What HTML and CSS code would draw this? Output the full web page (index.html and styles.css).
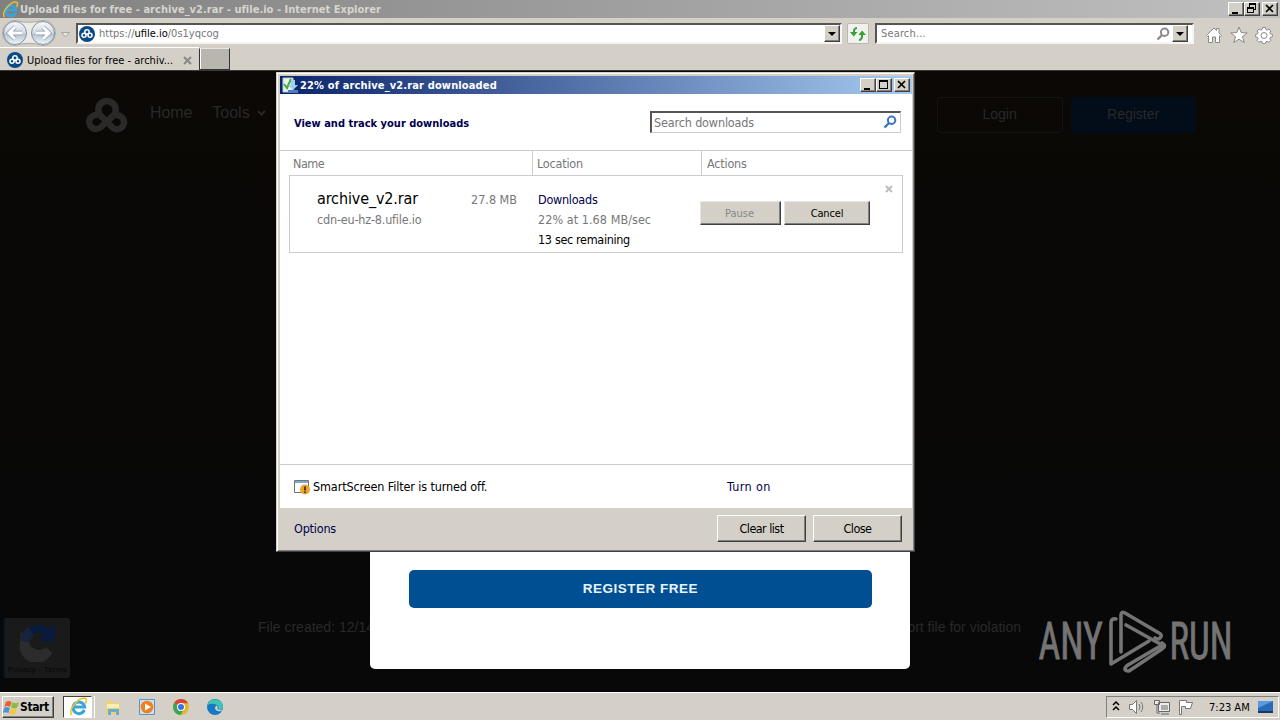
FILE: index.html
```
<!DOCTYPE html>
<html lang="en">
<head>
  <meta charset="UTF-8">
  <title>Upload files for free - archive_v2.rar - ufile.io</title>
  <link rel="stylesheet" href="styles.css">
</head>
<body>
  <svg class="defs" width="0" height="0">
    <symbol id="cloud" viewBox="0 0 46 35">
      <g fill="none" stroke="currentColor" stroke-width="6.500">
        <path d="M29 18A8.700 8.700 0 1 0 17 18L27.500 28.500A7 7 0 1 0 31 17.500"/>
        <path d="M15 17.500A7 7 0 1 0 17 29L29 18"/>
      </g>
    </symbol>
    <symbol id="ie" viewBox="0 0 18 18">
      <path d="M14.500 12.200A5.500 5.500 0 1 1 14.800 9.500H5" fill="none" stroke="#38a5dc" stroke-width="2.800"/>
      <path d="M2.500 17C-1 12 9 0 15.500 1.200c2 1 1 3 0 5" fill="none" stroke="#efc02d" stroke-width="1.500"/>
    </symbol>
    <symbol id="favicon" viewBox="0 0 16 16">
      <circle cx="8" cy="8" r="8" fill="#0a4a87"/>
      <g fill="none" stroke="#fff" stroke-width="1.500"><circle cx="8" cy="6" r="2.200"/><circle cx="5" cy="9.300" r="2"/><circle cx="11" cy="9.300" r="2"/></g>
    </symbol>
    <symbol id="glass" viewBox="0 0 14 14">
      <circle cx="8.600" cy="5.200" r="3.700" fill="none" stroke="currentColor" stroke-width="2"/>
      <path d="M6 8L1.500 12.500" stroke="currentColor" stroke-width="2.400"/>
    </symbol>
    <symbol id="min" viewBox="0 0 16 14"><path d="M4 10h6v2H4z"/></symbol>
    <symbol id="max" viewBox="0 0 16 14"><path d="M3 2h9v9H3zM4 4v6h7V4z" fill-rule="evenodd"/></symbol>
    <symbol id="restore" viewBox="0 0 16 14"><path d="M5 1h7v7h-2v3H3V5h2zM6 3v2h4v2h1V3zM4 7v3h5V7z" fill-rule="evenodd"/></symbol>
    <symbol id="close" viewBox="0 0 16 14"><path d="M4 3l7 7M11 3l-7 7" stroke="#000" stroke-width="1.700"/></symbol>
  </svg>

  <header class="browser">
    <div class="titlebar">
      <svg class="title-icon"><use href="#ie"/></svg>
      <span class="title-text">Upload files for free - archive_v2.rar - ufile.io - Internet Explorer</span>
      <div class="win-buttons">
        <span class="wb"><svg><use href="#min"/></svg></span><span class="wb"><svg><use href="#restore"/></svg></span><span class="wb last"><svg><use href="#close"/></svg></span>
      </div>
    </div>
    <div class="navbar">
      <svg class="back-forward" viewBox="0 0 72 28">
        <defs><linearGradient id="ball" x2="0" y2="1"><stop stop-color="#f7f8fa"/><stop offset=".5" stop-color="#d3dae2"/><stop offset=".55" stop-color="#b5c3d1"/><stop offset="1" stop-color="#eefaff"/></linearGradient></defs>
        <path d="M15 1.500Q29 5 43 1.500A12 12 0 0 1 43 26.500Q29 22 15 26.500A12 12 0 0 1 15 1.500" fill="#eceae6" stroke="#aaa8a4"/>
        <circle cx="15" cy="14" r="11.500" fill="url(#ball)" stroke="#8393a3"/>
        <circle cx="43" cy="14" r="11.500" fill="url(#ball)" stroke="#8393a3"/>
        <path d="M15 8l-6 6 6 6M10 14h12" fill="none" stroke="#8796a6" stroke-width="4.400"/>
        <path d="M43 8l6 6-6 6M48 14H36" fill="none" stroke="#8796a6" stroke-width="4.400"/>
        <path d="M15 8l-6 6 6 6M10 14h12" fill="none" stroke="#fff" stroke-width="3"/>
        <path d="M43 8l6 6-6 6M48 14H36" fill="none" stroke="#fff" stroke-width="3"/>
        <path d="M61.500 13.500h8l-4 4.500z" fill="#e8e6e2" stroke="#aaa69f"/>
      </svg>
      <div class="address">
        <svg class="fav"><use href="#favicon"/></svg>
        <span class="url">https://<b>ufile.io</b>/0s1yqcog</span>
        <span class="drop"></span>
      </div>
      <div class="refresh">
        <svg width="18" height="16" viewBox="0 0 18 16"><path d="M8 2Q4.500 2 5 7M10 14q3.500 0 3-6" fill="none" stroke="#35a035" stroke-width="2"/><path d="M1 6h7.500L4.700 10.500zM9.500 9L13 4.500 17 9z" fill="#35a035"/></svg>
      </div>
      <div class="search">
        <span class="search-text">Search...</span>
        <svg class="glass"><use href="#glass"/></svg>
        <span class="drop"></span>
      </div>
      <div class="tools">
        <svg viewBox="0 0 18 18"><path d="M1.500 9.500L9 2l2.500 2.500V2.500h2.500V7l2.500 2.500-1 1-1-.8V16.500h-4V11H7.500v5.500h-4V9.700l-1 .8z"/></svg>
        <svg viewBox="0 0 18 18"><path d="M9 1l2.200 5.600 6 .3-4.700 3.700 1.700 5.900L9 13.200l-5.200 3.300 1.700-5.900L.8 6.900l6-.3z"/></svg>
        <svg viewBox="0 0 18 18"><path d="M7.500 1.500h3l.4 2 1.300.6L14 3l1.800 1.900-1 1.800.5 1.100 2 .5v2.600l-2 .5-.5 1.200 1 1.800-1.900 1.900-1.800-1-1.200.5-.5 1.900h-3l-.4-2-1.100-.5-1.900 1.100-1.900-1.900 1-1.800-.5-1.200-2-.5V8.300l2-.5.500-1.100-1-1.800L4 3l1.800 1.100 1.200-.5z"/><circle cx="9" cy="9.500" r="3"/></svg>
      </div>
    </div>
    <div class="tabs">
      <div class="tab">
        <svg class="fav"><use href="#favicon"/></svg>
        <span class="tab-text">Upload files for free - archiv...</span>
        <svg class="tab-close" viewBox="0 0 9 9"><path d="M1 1l7 7M8 1L1 8" stroke="#8b8883" stroke-width="2"/></svg>
      </div>
      <div class="new-tab"></div>
    </div>
  </header>

  <main class="page">
    <nav class="site-nav">
      <svg class="logo"><use href="#cloud"/></svg>
      <span class="link">Home</span>
      <span class="link">Tools</span>
      <svg class="chev" viewBox="0 0 9 6"><path d="M1 1l3.500 3.500L8 1" fill="none" stroke="#292827" stroke-width="2"/></svg>
      <span class="site-btn login">Login</span>
      <span class="site-btn register">Register</span>
    </nav>
    <div class="meta">
      <span>File created: 12/14/2024</span>
      <span>Report file for violation</span>
    </div>
    <div class="captcha">
      <svg viewBox="0 0 40 40"><path d="M3 10l8 8a10 10 0 0 0 17 7l6 6A17 17 0 0 1 2 20z" fill="#2c2c2c"/><path d="M3 19A17 17 0 0 1 31 7l6-5v17H20l6-6a9 9 0 0 0-14 3z" fill="#0a1a3c"/><path d="M3 19A17 17 0 0 1 10 5l6 8-5 7z" fill="#16233c"/></svg>
      <span>Privacy - Terms</span>
    </div>
    <div class="modal"><div class="register-free">REGISTER FREE</div></div>
    <svg class="watermark" viewBox="0 0 200 70">
      <g fill="#747474" stroke="#747474" stroke-width=".8" font-family="Roboto" font-size="51.500">
        <text transform="translate(3.500 53.300) scale(.7 1)" textLength="92" lengthAdjust="spacingAndGlyphs">ANY</text>
        <text transform="translate(134.500 53.300) scale(.7 1)" textLength="90" lengthAdjust="spacingAndGlyphs">RUN</text>
      </g>
      <g fill="none" stroke="#747474" stroke-width="3.600" stroke-linecap="round" stroke-linejoin="round">
        <path d="M81 13q-5-1-5 4v41l38-23"/><path d="M86 46V9q0-4 4-2l34 20q4 2 1 5-2 2-5 0"/><path d="M91 19l36 20-34 20q-3 2-3 4t4 2l33-22q5-3 0-6"/>
      </g>
    </svg>
  </main>

  <section class="dialog">
    <div class="dlg-title">
      <svg class="dlg-icon" viewBox="0 0 16 16"><path d="M1 1h10v14H1z" fill="#e9f1e9" stroke="#b9cbd5"/><path d="M2 7l3 4 4-9" fill="none" stroke="#42ab45" stroke-width="2"/><path d="M9 3h4v5h3l-5 5-5-5h3z" fill="#9bd0f4"/><path d="M6 13h10v3H6z" fill="#4c7fba"/></svg>
      <span class="dlg-title-text">22% of archive_v2.rar downloaded</span>
      <div class="win-buttons">
        <span class="wb"><svg><use href="#min"/></svg></span><span class="wb"><svg><use href="#max"/></svg></span><span class="wb last"><svg><use href="#close"/></svg></span>
      </div>
    </div>
    <div class="dlg-head">
      <h1>View and track your downloads</h1>
      <div class="dlg-search"><span>Search downloads</span><svg><use href="#glass"/></svg></div>
    </div>
    <div class="columns">
      <span class="c1">Name</span><span class="c2">Location</span><span class="c3">Actions</span>
    </div>
    <div class="item">
      <div class="file"><span class="fname">archive_v2.rar</span><span class="host">cdn-eu-hz-8.ufile.io</span></div>
      <span class="size">27.8 MB</span>
      <div class="where"><span class="navy dl">Downloads</span><span class="speed">22% at 1.68 MB/sec</span><span class="remain">13 sec remaining</span></div>
      <div class="actions"><span class="btn pause">Pause</span><span class="btn cancel">Cancel</span></div>
      <svg class="item-close" viewBox="0 0 8 8"><path d="M1 1l6 6M7 1L1 7" stroke="#bdbdbd" stroke-width="2"/></svg>
    </div>
    <div class="smart">
      <svg viewBox="0 0 16 16"><path d="M.5 1.500h14v12H.5z" fill="#fff" stroke="#77736d"/><path d="M1 3h13" stroke="#7ca9d5" stroke-width="2"/><circle cx="11" cy="10.500" r="5" fill="#eea32d"/><path d="M11 7.500v4M11 12.500v1.500" stroke="#44300e" stroke-width="1.800"/></svg>
      <span class="ss">SmartScreen Filter is turned off.</span>
      <span class="navy on">Turn on</span>
    </div>
    <div class="dlg-foot">
      <span class="navy opt">Options</span>
      <span class="btn big">Clear list</span><span class="btn big">Close</span>
    </div>
  </section>

  <footer class="taskbar">
    <div class="start">
      <svg viewBox="0 0 18 16"><path d="M3 2q3-2 6 0L7.500 7.500q-3-2-6 0z" fill="#e8622c"/><path d="M10 2.500q3 2 7 0L15 8q-3 2-6.500 0z" fill="#8bbb40"/><path d="M1.200 8.500q3-2 6 0L5.700 14q-3-2-6 0z" fill="#4f92d5"/><path d="M8.200 9q3 2 6.500 0L13 14.500q-3 2-6.300 0z" fill="#f5c635"/></svg>
      <span>Start</span>
    </div>
    <div class="task active"><svg><use href="#ie"/></svg></div>
    <div class="quick">
      <svg viewBox="0 0 18 18"><path d="M2 3h6l1 2h7v11H2z" fill="#eed273"/><path d="M3 6h12v4H3z" fill="#f8eeb5"/><path d="M4 17v-6h11v6h-3v-3H7v3z" fill="#69acd4"/></svg>
      <svg viewBox="0 0 18 18"><path d="M1.500 1.500h15v15h-15z" fill="#c9dff2" stroke="#5e93c9"/><circle cx="9" cy="9" r="6.300" fill="#f0811c"/><path d="M7 5.500l6 3.500-6 3.500z" fill="#fff"/></svg>
      <svg viewBox="0 0 18 18"><circle cx="9" cy="9" r="8" fill="#e2b82d"/><path d="M9 9L2.100 5A8 8 0 0 1 16 5.200H9z" fill="#d84435"/><path d="M2.100 5a8 8 0 0 0 6.400 12L12 11 9 9z" fill="#3ca457"/><circle cx="9" cy="9" r="4" fill="#fff"/><circle cx="9" cy="9" r="3" fill="#3876dd"/></svg>
      <svg viewBox="0 0 18 18"><circle cx="9" cy="9" r="8" fill="#1778c4"/><path d="M1.500 7A8 8 0 0 1 17 8.500q0 4-5 3.500 2-4-2-5.500T1.500 7" fill="#40c4b4"/><path d="M10 7.500q-2.500 4 1.500 5.500 3 1 5-1-5 .5-5-1.500 1-2-1.500-3" fill="#d4d0c8"/></svg>
    </div>
    <div class="tray">
      <svg width="8" height="12" viewBox="0 0 8 12"><path d="M1 4l3-3 3 3M1 9l3-3 3 3" fill="none" stroke="#000" stroke-width="1.500"/></svg>
      <svg width="18" height="16" viewBox="0 0 18 16" fill="#fff" stroke="#777"><path d="M1.500 5.500h3l4-4v13l-4-4h-3z"/><path d="M11 5q2 3 0 6M13 3q3.500 5 0 10" fill="none"/></svg>
      <svg width="16" height="16" viewBox="0 0 16 16" fill="#eee" stroke="#666"><path d="M4.500 3.500h11v9h-11zM7 15h8M.5 1.500h5v4h-5zM3 5.500V14h3"/><path d="M7 6h7v5H7z" fill="#aaa" stroke="none"/></svg>
      <svg width="16" height="16" viewBox="0 0 16 16" fill="#fff" stroke="#777"><path d="M1.500 15.500v-14h7v2h6l-2 6h-5v-2h-4v8z"/></svg>
      <span class="clock">7:23 AM</span>
      <svg width="15" height="14" viewBox="0 0 15 14"><path d="M0 1h15v10H0z" fill="#2a6abb"/><path d="M0 1h15L0 8z" fill="#5a9ae0"/><path d="M0 11h15v2H0z" fill="#1e355d"/></svg>
    </div>
  </footer>
</body>
</html>
```
FILE: styles.css
```
* {
  box-sizing: border-box;
}

body {
  margin: 0;
  width: 1280px;
  height: 720px;
  overflow: hidden;
  display: flex;
  flex-direction: column;
  position: relative;
  background: #0a0806;
  font-family: 'DejaVu Sans Condensed', 'DejaVu Sans', sans-serif;
  font-stretch: condensed;
  font-size: 12px;
  color: #000;
  white-space: nowrap;
}

svg {
  display: block;
  flex: none;
}

.defs {
  position: absolute;
}

.browser {
  height: 71px;
  background: #d4d0c8;
  border-bottom: 1px solid #3c3a37;
}

.titlebar {
  height: 18px;
  display: flex;
  align-items: center;
  padding: 0 2px;
  background: linear-gradient(90deg, #808080, #c0c0c0);
}

.title-icon {
  width: 17px;
  height: 17px;
}

.title-text {
  flex: 1;
  font-size: 11px;
  font-weight: bold;
  color: #d8d5cf;
  margin-left: 1px;
  letter-spacing: 0.03px;
}

.win-buttons {
  display: flex;
}

.wb {
  width: 16px;
  height: 14px;
  background: #d4d0c8;
  border: 1px solid;
  border-color: #fff #404040 #404040 #fff;
  box-shadow: inset -1px -1px #808080;
}

.wb svg {
  width: 16px;
  height: 14px;
  margin: -1px;
}

.wb.last {
  margin-left: 2px;
}

.navbar {
  height: 29px;
  display: flex;
  align-items: center;
}

.back-forward {
  width: 72px;
  height: 28px;
}

.address {
  width: 766px;
  height: 21px;
  margin-left: 4px;
  margin-top: 2px;
  display: flex;
  align-items: center;
  background: #fff;
  border: 2px solid;
  border-color: #555 #f6f5f2 #f6f5f2 #555;
}

.fav {
  width: 16px;
  height: 16px;
}

.address .fav {
  margin-left: 1px;
}

.url {
  flex: 1;
  margin-left: 4px;
  font-size: 11px;
  color: #777;
}

.url b {
  font-weight: normal;
  color: #000;
}

.drop {
  width: 16px;
  height: 17px;
  background: #d4d0c8;
  border: 1px solid;
  border-color: #fff #404040 #404040 #fff;
  box-shadow: inset -1px -1px #808080;
  display: flex;
  align-items: center;
  justify-content: center;
}

.drop::after {
  content: '';
  border: 4px solid transparent;
  border-top-color: #000;
  border-bottom: 0;
}

.refresh {
  width: 22px;
  height: 21px;
  margin: 2px 0 0 5px;
  display: flex;
  align-items: center;
  justify-content: center;
  background: #f1f1ef;
  border: 1px solid #bcb9b3;
  border-radius: 2px;
}

.search {
  width: 319px;
  height: 21px;
  margin: 2px 0 0 6px;
  display: flex;
  align-items: center;
  background: #fff;
  border: 2px solid;
  border-color: #555 #f6f5f2 #f6f5f2 #555;
  padding-right: 4px;
}

.search-text {
  flex: 1;
  margin-left: 4px;
  font-size: 11px;
  letter-spacing: 0.15px;
  color: #777;
}

.glass {
  width: 14px;
  height: 14px;
  color: #8c8c8c;
  margin-right: 2px;
}

.tools {
  display: flex;
  gap: 7px;
  margin: 4px 0 0 11px;
}

.tools svg {
  width: 18px;
  height: 18px;
  fill: #fff;
  stroke: #8b8985;
}

.tabs {
  height: 23px;
  display: flex;
}

.tab {
  width: 199px;
  display: flex;
  align-items: center;
  padding: 2px 0 0 7px;
  border-top: 1px solid #fff;
}

.tab-text {
  width: 152px;
  margin-left: 4px;
  font-size: 11px;
}

.tab-close {
  width: 9px;
  height: 9px;
  margin-left: 4px;
}

.new-tab {
  width: 31px;
  height: 22px;
  margin-top: 1px;
  background: #b9b5af;
  border: 1px solid;
  border-color: #e9e7e3 #333 #333 #333;
  box-shadow: inset 1px 0 #fff;
}

.page {
  position: relative;
  height: 621px;
  background: linear-gradient(#0b0805, #080808 80%, #070807);
  font-family: 'Liberation Sans', Arial, sans-serif;
}

.site-nav {
  display: flex;
  align-items: center;
  height: 36px;
  margin: 26px 0 0 84px;
}

.logo {
  width: 46px;
  height: 35px;
  color: #2a2928;
}

.link {
  font-size: 16px;
  color: #292827;
  margin: -5px 0 0 20px;
}

.logo + .link {
  letter-spacing: -0.1px;
}

.chev {
  width: 9px;
  height: 6px;
  margin: -5px 0 0 7px;
}

.site-btn {
  width: 126px;
  height: 36px;
  line-height: 34px;
  border-radius: 4px;
  text-align: center;
  font-size: 14px;
  color: #292827;
}

.login {
  margin-left: 671px;
  border: 1px solid #161412;
  line-height: 32px;
}

.register {
  width: 125px;
  margin-left: 8px;
  background: #020d19;
}

.meta {
  display: flex;
  justify-content: space-between;
  width: 763px;
  margin: 486px 0 0 258px;
  font-size: 14px;
  color: #292929;
}

.captcha {
  position: absolute;
  left: 3px;
  top: 547px;
  width: 67px;
  height: 60px;
  background: #1a1a1a;
  border-left: 2px solid #061127;
  border-radius: 2px;
  display: flex;
  flex-direction: column;
  align-items: center;
  font-size: 8px;
  letter-spacing: 0.3px;
  color: #050505;
}

.captcha svg {
  width: 40px;
  height: 40px;
  margin: 4px 0 3px;
}

.modal {
  position: absolute;
  left: 370px;
  top: 400px;
  width: 540px;
  height: 198px;
  padding: 99px 38px 0 39px;
  background: #fff;
  border-radius: 5px;
}

.register-free {
  height: 38px;
  line-height: 37px;
  background: #004f92;
  border-radius: 5px;
  text-align: center;
  color: #e8f3fa;
  font-size: 13.5px;
  font-weight: bold;
  letter-spacing: 0.5px;
}

.watermark {
  position: absolute;
  left: 1035px;
  top: 535px;
  width: 200px;
  height: 70px;
}

.dialog {
  position: absolute;
  left: 276px;
  top: 72px;
  width: 639px;
  height: 480px;
  padding: 3px 2px 3px 3px;
  background: #d4d0c8;
  border: 1px solid;
  border-color: #d4d0c8 #404040 #404040 #d4d0c8;
  box-shadow: inset 1px 1px #fff, inset -1px -1px #808080;
  font-size: 12.5px;
  color: #777;
}

.dlg-title {
  height: 18px;
  display: flex;
  align-items: center;
  padding: 0 2px;
  background: linear-gradient(90deg, #0a246a, #a6caf0);
}

.dlg-icon {
  width: 16px;
  height: 16px;
}

.dlg-title-text {
  flex: 1;
  margin-left: 2px;
  font-size: 11px;
  font-weight: bold;
  letter-spacing: 0.14px;
  color: #fff;
}

.dlg-head {
  height: 57px;
  display: flex;
  align-items: center;
  justify-content: space-between;
  padding: 0 11px 0 14px;
  background: #fff;
  border-bottom: 1px solid #ccc;
}

h1 {
  margin: 2px 0 0;
  font-size: 11px;
  color: #00004f;
}

.dlg-search {
  width: 251px;
  height: 22px;
  display: flex;
  align-items: center;
  justify-content: space-between;
  margin-top: -1px;
  padding: 0 3px 0 2px;
  border: 1px solid #ccc;
  border-top: 2px solid #555;
  border-left: 2px solid #555;
  letter-spacing: -0.15px;
}

.dlg-search svg {
  width: 14px;
  height: 14px;
  color: #3a76b8;
}

.columns {
  height: 24px;
  display: flex;
  background: #fff;
  line-height: 25px;
  letter-spacing: -0.2px;
}

.c1 {
  width: 252px;
  padding-left: 13px;
  letter-spacing: -0.5px;
}

.c2 {
  width: 169px;
  padding-left: 4px;
  border-left: 1px solid #ccc;
}

.c3 {
  flex: 1;
  padding-left: 5px;
  border-left: 1px solid #ccc;
}

.item {
  height: 78px;
  display: flex;
  padding: 14px 13px 0 37px;
  background: #fff;
  position: relative;
}

.item::before {
  content: '';
  position: absolute;
  inset: 0 9px 0 9px;
  border: 1px solid #ccc;
}

.file {
  width: 154px;
  display: flex;
  flex-direction: column;
}

.fname {
  font-size: 16px;
  line-height: 20px;
  letter-spacing: -0.13px;
  color: #000;
}

.host {
  line-height: 22px;
  letter-spacing: -0.19px;
}

.size {
  width: 67px;
  line-height: 22px;
}

.where {
  width: 162px;
  display: flex;
  flex-direction: column;
  line-height: 20px;
  padding-top: 1px;
}

.navy {
  color: #00004f;
}

.dl {
  letter-spacing: -0.25px;
}

.speed {
  letter-spacing: 0.05px;
}

.remain {
  color: #000;
  letter-spacing: -0.33px;
}

.actions {
  display: flex;
  gap: 3px;
  margin-top: 12px;
}

.btn {
  display: flex;
  align-items: center;
  justify-content: center;
  height: 24px;
  background: #d4d0c8;
  border: 1px solid;
  border-color: #e8e6e2 #404040 #404040 #e8e6e2;
  box-shadow: inset -1px -1px #808080;
  font-size: 11px;
  color: #000;
}

.pause {
  width: 81px;
  padding-right: 2px;
  color: #888;
}

.cancel {
  width: 86px;
  letter-spacing: -0.15px;
}

.item-close {
  width: 8px;
  height: 8px;
  margin: -4px 0 0 15px;
}

.smart {
  height: 255px;
  display: flex;
  align-items: center;
  padding: 212px 0 0 14px;
  background: linear-gradient(#ccc, #ccc) 0 211px / 100% 1px no-repeat #fff;
  color: #000;
}

.smart svg {
  width: 16px;
  height: 16px;
}

.ss {
  width: 414px;
  margin-left: 3px;
  letter-spacing: -0.12px;
}

.on {
  letter-spacing: 0.35px;
}

.dlg-foot {
  display: flex;
  align-items: center;
  height: 40px;
  padding-left: 14px;
}

.opt {
  flex: 1;
  letter-spacing: -0.2px;
}

.btn.big {
  width: 89px;
  height: 27px;
  margin-right: 7px;
  border-color: #fff #404040 #404040 #fff;
  font-size: 12.5px;
  letter-spacing: -0.55px;
}

.btn.big:last-child {
  margin-right: 10px;
}

.taskbar {
  height: 28px;
  display: flex;
  align-items: center;
  padding: 1px 1px 0 2px;
  background: #d4d0c8;
  border-top: 1px solid #fff;
}

.start {
  width: 52px;
  height: 22px;
  display: flex;
  align-items: center;
  border: 1px solid;
  border-color: #fff #404040 #404040 #fff;
  box-shadow: inset -1px -1px #808080;
  font-weight: bold;
  font-size: 12px;
  letter-spacing: -0.4px;
}

.start svg {
  width: 17px;
  height: 15px;
}

.task {
  width: 29px;
  height: 22px;
  margin-left: 9px;
  padding-left: 5px;
  background: #fff;
  border: 1px solid;
  border-color: #404040 #fff #fff #404040;
  box-shadow: 2px 0 #d4d0c8, 3px 0 #fff;
}

.task svg {
  width: 19px;
  height: 19px;
}

.quick {
  flex: 1;
  display: flex;
  gap: 16px;
  margin-left: 12px;
}

.quick svg {
  width: 18px;
  height: 18px;
}

.tray {
  width: 173px;
  height: 22px;
  display: flex;
  align-items: center;
  gap: 8px;
  padding-left: 5px;
  border: 1px solid;
  border-color: #808080 #fff #fff #808080;
}

.clock {
  margin-left: 7px;
  font-size: 11px;
}
```
